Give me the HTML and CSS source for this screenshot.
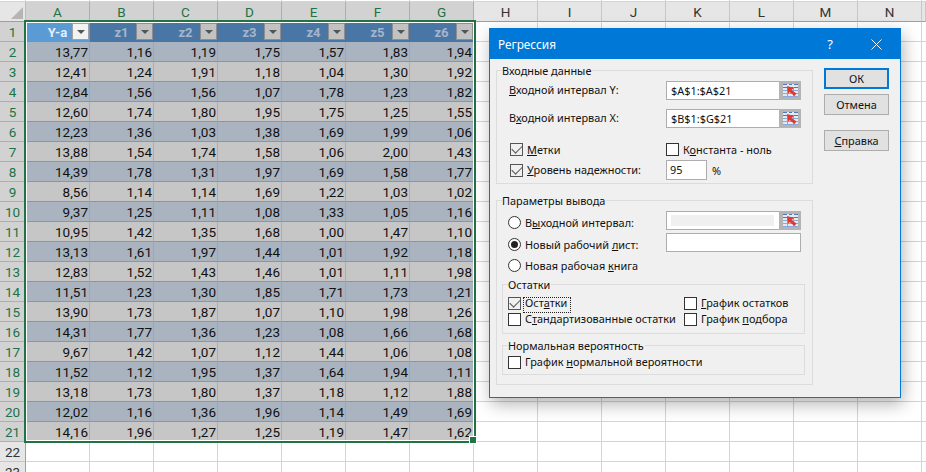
FILE: index.html
```html
<!DOCTYPE html>
<html lang="ru">
<head>
<meta charset="utf-8">
<title>Регрессия</title>
<link rel="stylesheet" href="styles.css">
</head>
<body>
<div class="sheet">
  <div class="corner"><span class="corner-tri"></span></div>
  <div class="ch sel">A</div><div class="ch sel">B</div><div class="ch sel">C</div><div class="ch sel">D</div><div class="ch sel">E</div><div class="ch sel">F</div><div class="ch sel">G</div><div class="ch">H</div><div class="ch">I</div><div class="ch">J</div><div class="ch">K</div><div class="ch">L</div><div class="ch">M</div><div class="ch">N</div><div class="ch"></div>

  <div class="rh sel">1</div>
  <div class="th active">Y-a<span class="fb"><i></i></span></div><div class="th">z1<span class="fb"><i></i></span></div><div class="th">z2<span class="fb"><i></i></span></div><div class="th">z3<span class="fb"><i></i></span></div><div class="th">z4<span class="fb"><i></i></span></div><div class="th">z5<span class="fb"><i></i></span></div><div class="th">z6<span class="fb"><i></i></span></div><div class="rest"></div>

  <div class="rh sel">2</div><div class="c b">13,77</div><div class="c b">1,16</div><div class="c b">1,19</div><div class="c b">1,75</div><div class="c b">1,57</div><div class="c b">1,83</div><div class="c b">1,94</div><div class="rest"></div>
  <div class="rh sel">3</div><div class="c">12,41</div><div class="c">1,24</div><div class="c">1,91</div><div class="c">1,18</div><div class="c">1,04</div><div class="c">1,30</div><div class="c">1,92</div><div class="rest"></div>
  <div class="rh sel">4</div><div class="c b">12,84</div><div class="c b">1,56</div><div class="c b">1,56</div><div class="c b">1,07</div><div class="c b">1,78</div><div class="c b">1,23</div><div class="c b">1,82</div><div class="rest"></div>
  <div class="rh sel">5</div><div class="c">12,60</div><div class="c">1,74</div><div class="c">1,80</div><div class="c">1,95</div><div class="c">1,75</div><div class="c">1,25</div><div class="c">1,55</div><div class="rest"></div>
  <div class="rh sel">6</div><div class="c b">12,23</div><div class="c b">1,36</div><div class="c b">1,03</div><div class="c b">1,38</div><div class="c b">1,69</div><div class="c b">1,99</div><div class="c b">1,06</div><div class="rest"></div>
  <div class="rh sel">7</div><div class="c">13,88</div><div class="c">1,54</div><div class="c">1,74</div><div class="c">1,58</div><div class="c">1,06</div><div class="c">2,00</div><div class="c">1,43</div><div class="rest"></div>
  <div class="rh sel">8</div><div class="c b">14,39</div><div class="c b">1,78</div><div class="c b">1,31</div><div class="c b">1,97</div><div class="c b">1,69</div><div class="c b">1,58</div><div class="c b">1,77</div><div class="rest"></div>
  <div class="rh sel">9</div><div class="c">8,56</div><div class="c">1,14</div><div class="c">1,14</div><div class="c">1,69</div><div class="c">1,22</div><div class="c">1,03</div><div class="c">1,02</div><div class="rest"></div>
  <div class="rh sel">10</div><div class="c b">9,37</div><div class="c b">1,25</div><div class="c b">1,11</div><div class="c b">1,08</div><div class="c b">1,33</div><div class="c b">1,05</div><div class="c b">1,16</div><div class="rest"></div>
  <div class="rh sel">11</div><div class="c">10,95</div><div class="c">1,42</div><div class="c">1,35</div><div class="c">1,68</div><div class="c">1,00</div><div class="c">1,47</div><div class="c">1,10</div><div class="rest"></div>
  <div class="rh sel">12</div><div class="c b">13,13</div><div class="c b">1,61</div><div class="c b">1,97</div><div class="c b">1,44</div><div class="c b">1,01</div><div class="c b">1,92</div><div class="c b">1,18</div><div class="rest"></div>
  <div class="rh sel">13</div><div class="c">12,83</div><div class="c">1,52</div><div class="c">1,43</div><div class="c">1,46</div><div class="c">1,01</div><div class="c">1,11</div><div class="c">1,98</div><div class="rest"></div>
  <div class="rh sel">14</div><div class="c b">11,51</div><div class="c b">1,23</div><div class="c b">1,30</div><div class="c b">1,85</div><div class="c b">1,71</div><div class="c b">1,73</div><div class="c b">1,21</div><div class="rest"></div>
  <div class="rh sel">15</div><div class="c">13,90</div><div class="c">1,73</div><div class="c">1,87</div><div class="c">1,07</div><div class="c">1,10</div><div class="c">1,98</div><div class="c">1,26</div><div class="rest"></div>
  <div class="rh sel">16</div><div class="c b">14,31</div><div class="c b">1,77</div><div class="c b">1,36</div><div class="c b">1,23</div><div class="c b">1,08</div><div class="c b">1,66</div><div class="c b">1,68</div><div class="rest"></div>
  <div class="rh sel">17</div><div class="c">9,67</div><div class="c">1,42</div><div class="c">1,07</div><div class="c">1,12</div><div class="c">1,44</div><div class="c">1,06</div><div class="c">1,08</div><div class="rest"></div>
  <div class="rh sel">18</div><div class="c b">11,52</div><div class="c b">1,12</div><div class="c b">1,95</div><div class="c b">1,37</div><div class="c b">1,64</div><div class="c b">1,94</div><div class="c b">1,11</div><div class="rest"></div>
  <div class="rh sel">19</div><div class="c">13,18</div><div class="c">1,73</div><div class="c">1,80</div><div class="c">1,37</div><div class="c">1,18</div><div class="c">1,12</div><div class="c">1,88</div><div class="rest"></div>
  <div class="rh sel">20</div><div class="c b">12,02</div><div class="c b">1,16</div><div class="c b">1,36</div><div class="c b">1,96</div><div class="c b">1,14</div><div class="c b">1,49</div><div class="c b">1,69</div><div class="rest"></div>
  <div class="rh sel">21</div><div class="c">14,16</div><div class="c">1,96</div><div class="c">1,27</div><div class="c">1,25</div><div class="c">1,19</div><div class="c">1,47</div><div class="c">1,62</div><div class="rest"></div>
  <div class="rh">22</div><div class="blank"></div>
  <div class="rh">23</div><div class="blank"></div>

  <div class="selection"><span class="handle"></span></div>
</div>

<section class="dialog">
  <header class="titlebar">
    <span class="title">Регрессия</span>
    <span class="help">?</span>
    <svg class="close" width="11" height="11" viewBox="0 0 11 11"><path d="M.5.5l10 10M10.5.5l-10 10" stroke="#fff" stroke-width="1" fill="none"/></svg>
  </header>
  <div class="client">
    <div class="main">
      <fieldset class="group g-input">
        <legend>Входные данные</legend>
        <div class="range-row r1">
          <span class="lbl"><u>В</u>ходной интервал Y:</span>
          <span class="range"><span class="txt">$A$1:$A$21</span><span class="pick"><svg width="15" height="13" viewBox="0 0 15 13"><use href="#picker"/></svg></span></span>
        </div>
        <div class="range-row r2">
          <span class="lbl">В<u>х</u>одной интервал X:</span>
          <span class="range"><span class="txt">$B$1:$G$21</span><span class="pick"><svg width="15" height="13" viewBox="0 0 15 13"><use href="#picker"/></svg></span></span>
        </div>
        <div class="opt-row o1">
          <span class="chk on"></span><span class="opt-a"><u>М</u>етки</span>
          <span class="chk"></span><span class="opt-b">К<u>о</u>нстанта - ноль</span>
        </div>
        <div class="opt-row o2">
          <span class="chk on"></span><span class="opt-a"><u>У</u>ровень надежности:</span>
          <span class="num">95</span><span class="pct">%</span>
        </div>
      </fieldset>

      <fieldset class="group g-output">
        <legend>Параметры вывода</legend>
        <div class="radio-row rr1">
          <span class="rad"></span><span class="rad-l">В<u>ы</u>ходной интервал:</span>
          <span class="range disabled"><span class="txt"><b></b></span><span class="pick"><svg width="15" height="13" viewBox="0 0 15 13"><use href="#picker"/></svg></span></span>
        </div>
        <div class="radio-row rr2">
          <span class="rad on"></span><span class="rad-l">Новый рабочий <u>л</u>ист:</span>
          <span class="field"></span>
        </div>
        <div class="radio-row rr3">
          <span class="rad"></span><span class="rad-l">Новая рабочая <u>к</u>нига</span>
        </div>
        <fieldset class="group inner g-res">
          <legend>Остатки</legend>
          <div class="res-row first">
            <span class="chk on"></span><span class="res-a focus">Ост<u>а</u>тки</span>
            <span class="chk"></span><span class="res-b"><u>Г</u>рафик остатков</span>
          </div>
          <div class="res-row">
            <span class="chk"></span><span class="res-a">С<u>т</u>андартизованные остатки</span>
            <span class="chk"></span><span class="res-b">График <u>п</u>одбора</span>
          </div>
        </fieldset>
        <fieldset class="group inner g-norm">
          <legend>Нормальная вероятность</legend>
          <div class="res-row first-n">
            <span class="chk"></span><span class="res-b">График <u>н</u>ормальной вероятности</span>
          </div>
        </fieldset>
      </fieldset>
    </div>
    <div class="buttons">
      <button class="btn default">ОК</button>
      <button class="btn">Отмена</button>
      <button class="btn help-btn"><u>С</u>правка</button>
    </div>
  </div>
</section>

<svg class="defs" width="0" height="0">
  <symbol id="picker" viewBox="0 0 15 13">
    <rect width="15" height="13" fill="#e4eaf4"/>
    <path d="M0 .5h4M6 .5h3M11 .5h4M0 3.5h15" stroke="#4f78bd" stroke-width="1" fill="none"/>
    <path d="M0 6.5h15M0 9.5h15M0 12.5h15M4.5 3v10M10.5 3v10" stroke="#8aa8da" stroke-width="1" fill="none"/>
    <path d="M4 2l7 2-2.5 2 5 3.5-2 2.5-5-4L5 10z" fill="#e03a2e"/>
  </symbol>
</svg>
</body>
</html>
```

FILE: styles.css
```css
* { box-sizing: border-box; }
html, body { margin: 0; height: 100%; }
body { width: 926px; height: 472px; overflow: hidden; background: #fff; position: relative; }

.sheet {
  position: relative;
  width: 926px;
  height: 472px;
  padding-top: 2px;
  display: grid;
  grid-template-columns: 26px repeat(14, 64px) 4px;
  grid-template-rows: repeat(24, 20px);
  font-family: "Roboto", "Liberation Sans", sans-serif;
  font-size: 13.5px;
  color: #111;
  background-color: #fff;
  background-image:
    linear-gradient(to right, transparent 63px, #d4d4d4 63px),
    linear-gradient(to bottom, transparent 19px, #d4d4d4 19px);
  background-size: 64px 100%, 100% 20px;
  background-position: 26px 0, 0 2px;
}
.corner { background: #e6e6e6; border-right: 1px solid #bdbdbd; border-bottom: 1px solid #9e9e9e; position: relative; }
.corner-tri { position: absolute; right: 2px; bottom: 2px; width: 0; height: 0; border-style: solid; border-width: 0 0 12px 12px; border-color: transparent transparent #b5b5b5 transparent; }
.ch { background: #e6e6e6; border-right: 1px solid #c6c6c6; border-bottom: 1px solid #9e9e9e; display: flex; align-items: center; justify-content: center; font-size: 13.5px; color: #333; }
.ch.sel { background: #d2d2d2; color: #217346; border-right-color: #aeaeae; border-bottom: 1px solid #217346; }
.rh { background: #e6e6e6; border-right: 1px solid #9e9e9e; border-bottom: 1px solid #c6c6c6; display: flex; align-items: center; justify-content: center; font-size: 13.5px; color: #333; }
.rh.sel { background: #d2d2d2; color: #217346; border-bottom-color: #aeaeae; border-right: 1px solid #217346; }
.rest { grid-column: 9 / -1; }
.blank { grid-column: 2 / -1; }

.th { position: relative; background: #4a76a6; color: #a4b6cb; font-weight: 700; display: flex; align-items: center; justify-content: center; font-size: 13px; padding-right: 1px; }
.th.active { background: #5b9bd5; color: #e6eff8; }
.fb { position: absolute; right: 1px; top: 1px; width: 17px; height: 17px; background: #c2c2c2; border: 1px solid #8f8f8f; display: flex; align-items: center; justify-content: center; }
.th.active .fb { background: #f2f2f2; border-color: #a0a0a0; }
.fb i { width: 0; height: 0; border-style: solid; border-width: 4px 4px 0 4px; border-color: #555 transparent transparent transparent; }

.c { background: #c6c6c6; border-right: 1px solid #adadad; border-bottom: 1px solid #7f98b4; display: flex; align-items: center; justify-content: flex-end; padding-right: 1px; }
.c.b { background: #a9b4c0; border-right-color: #9aa7b5; }

.selection { position: absolute; left: 24px; top: 20px; width: 452px; height: 423px; border: 2px solid #217346; box-shadow: inset 0 0 0 1px #fff; pointer-events: none; }
.handle { position: absolute; right: -2px; bottom: -2px; width: 6px; height: 6px; background: #217346; outline: 1px solid #fff; }

.dialog {
  position: absolute; left: 489px; top: 28px; width: 412px; height: 370px;
  border: 1px solid #0078d7; background: #f0f0f0;
  box-shadow: 2px 6px 16px rgba(0,0,0,.3);
  display: flex; flex-direction: column;
  font-family: "Noto Sans", "Open Sans", sans-serif; font-size: 10.9px; color: #111;
  white-space: nowrap;
}
.titlebar { height: 30px; background: #0078d7; color: #fff; display: flex; align-items: center; padding: 0 18px 0 8px; flex: none; font-size: 11.8px; }
.title { flex: 1; }
.help { margin-right: 38px; font-size: 13px; }
.client { flex: 1; display: flex; padding: 4px 11px 0 6px; }
.main { width: 317px; display: flex; flex-direction: column; }
.group { margin: 0; padding: 0; border: 1px solid #dcdcdc; min-width: 0; position: relative; }
.group legend { padding: 0 1px 0 0; margin-left: 5px; line-height: 16px; height: 14px; }
.g-input { height: 121px; }
.g-output { height: 192px; margin-top: 9px; }
.inner { width: 303px; margin-left: 5px; }
.g-res { height: 57px; margin-top: 2px; }
.g-norm { height: 37px; margin-top: 4px; }

.range-row { display: flex; align-items: center; height: 19px; margin-left: 12px; }
.r1 { margin-top: 4px; }
.r2 { margin-top: 9px; }
.lbl { width: 157px; padding-bottom: 2px; }
.range { width: 135px; height: 19px; border: 1px solid #adadad; background: #fff; display: flex; }
.txt { flex: 1; padding-left: 4px; line-height: 17px; }
.pick { width: 22px; margin: -1px -1px -1px 0; background: #b4b4b4; display: flex; align-items: center; justify-content: center; flex: none; }
.opt-row { display: flex; align-items: center; margin-left: 13px; }
.o1 { margin-top: 15px; height: 13px; }
.o2 { margin-top: 4px; height: 20px; }
.o2 .opt-a { padding-bottom: 2px; }
.opt-a { width: 139px; margin-left: 4px; }
.opt-b { margin-left: 4px; }
.chk { width: 13px; height: 13px; border: 1px solid #333; background: #fff; flex: none; position: relative; }
.chk.on { background: #f0f0f0; border-color: #555; }
.chk.on::after { content: ""; position: absolute; left: 1px; top: 1px; width: 9px; height: 5px; border-left: 1px solid #555; border-bottom: 1px solid #555; transform: rotate(-45deg); }
.num { width: 41px; height: 20px; border: 1px solid #adadad; background: #fff; padding-left: 3px; line-height: 18px; }
.pct { margin-left: 5px; }

.radio-row { display: flex; align-items: center; margin-left: 11px; }
.rr1 { margin-top: 4px; height: 19px; }
.rr2 { margin-top: 3px; height: 19px; }
.rr3 { margin-top: 3px; height: 20px; }
.rr1 .rad, .rr1 .rad-l, .rr2 .rad, .rr2 .rad-l { margin-top: 4px; }
.rad { width: 13px; height: 13px; border: 1px solid #333; border-radius: 50%; background: #fff; position: relative; flex: none; }
.rad.on::after { content: ""; position: absolute; inset: 2px; border-radius: 50%; background: #222; }
.rad-l { margin-left: 4px; width: 141px; }
.field { width: 135px; height: 19px; border: 1px solid #adadad; background: #fff; }
.range.disabled .txt { padding: 3px 5px 3px 4px; }
.range.disabled b { display: block; height: 11px; background: #f0f0f0; }

.res-row { display: flex; align-items: center; height: 16px; margin-left: 5px; }
.first { margin-top: 4px; }
.first-n { margin-top: 2px; }
.res-a { width: 159px; margin-left: 4px; padding-bottom: 2px; }
.res-b { margin-left: 4px; padding-bottom: 2px; }
.focus { position: relative; }
.focus::before { content: ""; position: absolute; left: -2px; top: 2px; width: 46px; height: 14px; border: 1px dotted #222; }

.buttons { display: flex; flex-direction: column; width: 65px; margin-left: 11px; padding-top: 5px; }
.btn { width: 65px; height: 21px; background: #e1e1e1; border: 1px solid #adadad; font: inherit; color: #111; padding: 0; margin-bottom: 5px; }
.btn.default { border: 2px solid #0078d7; }
.help-btn { margin-top: 10px; }
.defs { position: absolute; }
```
